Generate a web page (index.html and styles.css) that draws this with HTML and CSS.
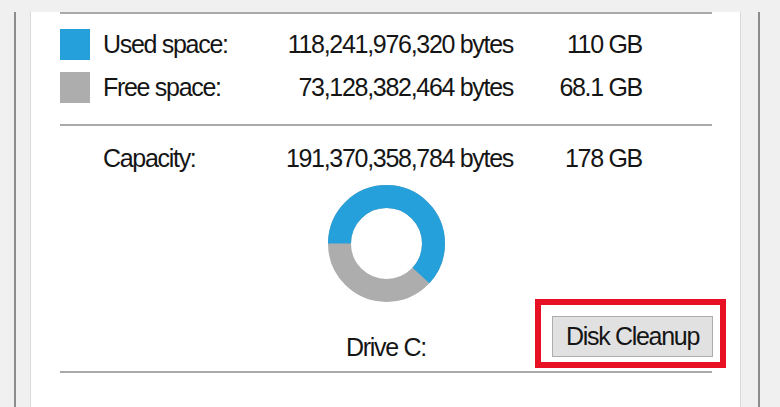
FILE: index.html
```html
<!DOCTYPE html>
<html lang="en">
<head>
    <meta charset="UTF-8">
    <title>Local Disk (C:) Properties</title>
    <link rel="stylesheet" href="styles.css">
</head>
<body>
    <div class="dialog">
        <div class="panel">
            <div class="rule"></div>
            <div class="usage">
                <div class="row">
                    <span class="swatch used"></span>
                    <span class="label">Used space:</span>
                    <span class="bytes">118,241,976,320 bytes</span>
                    <span class="size">110 GB</span>
                </div>
                <div class="row">
                    <span class="swatch free"></span>
                    <span class="label">Free space:</span>
                    <span class="bytes">73,128,382,464 bytes</span>
                    <span class="size">68.1 GB</span>
                </div>
            </div>
            <div class="rule"></div>
            <div class="row capacity">
                <span class="swatch"></span>
                <span class="label">Capacity:</span>
                <span class="bytes">191,370,358,784 bytes</span>
                <span class="size">178 GB</span>
            </div>
            <div class="chart">
                <svg width="117" height="117" viewBox="0 0 117 117">
                    <circle cx="58.5" cy="58.5" r="47" fill="none" stroke="#adadad" stroke-width="23"/>
                    <circle cx="58.5" cy="58.5" r="47" fill="none" stroke="#26a0da" stroke-width="23"
                        stroke-dasharray="182.5 300" transform="rotate(180 58.5 58.5)"/>
                </svg>
            </div>
            <div class="drive-row">
                <span></span>
                <span class="drive">Drive C:</span>
                <div class="highlight">
                    <button class="cleanup">Disk Cleanup</button>
                </div>
            </div>
            <div class="rule"></div>
        </div>
    </div>
</body>
</html>
```

FILE: styles.css
```css
* {
    margin: 0;
    padding: 0;
    box-sizing: border-box;
}
body {
    background: #f0f0f0;
    color: #151515;
    font-family: "Liberation Sans", Arial, sans-serif;
    font-size: 25px;
    letter-spacing: -1.3px;
    height: 407px;
    overflow: hidden;
}
.dialog {
    height: 407px;
    margin: 0 20px 0 14px;
    padding: 0 17px 0 14px;
    border-left: 2px solid #8c8c8c;
    border-right: 2px solid #8c8c8c;
}
.panel {
    height: 100%;
    background: #fff;
    border-left: 1px solid #dadada;
    border-right: 1px solid #dadada;
    padding: 0 28px 0 29px;
}
.rule {
    height: 2px;
    background: #a9a9a9;
}
.panel > .rule:first-child {
    margin-top: 12px;
}
.usage {
    margin: 15px 0 21px;
    display: flex;
    flex-direction: column;
    gap: 12px;
}
.row {
    display: flex;
    height: 31px;
    line-height: 31px;
    white-space: nowrap;
}
.swatch {
    width: 30px;
    height: 31px;
    margin-right: 13px;
}
.swatch.used {
    background: #26a0da;
}
.swatch.free {
    background: #adadad;
}
.label {
    width: 147px;
}
.bytes {
    width: 263px;
    text-align: right;
}
.size {
    width: 129px;
    text-align: right;
}
.capacity {
    margin-top: 17px;
}
.chart {
    display: flex;
    justify-content: center;
    margin-top: 11px;
}
.chart svg {
    display: block;
}
.drive-row {
    display: grid;
    grid-template-columns: 1fr auto 1fr;
    align-items: end;
    margin: -3px 0 3px;
}
.drive {
    line-height: 31px;
    margin-bottom: 5px;
}
.highlight {
    justify-self: end;
    margin-right: -14px;
    border: 6px solid #e81123;
    padding: 11px 7px 5px 11px;
}
.cleanup {
    display: block;
    width: 161px;
    height: 41px;
    background: #e1e1e1;
    border: 1px solid #adadad;
    color: #151515;
    font: inherit;
    letter-spacing: -1.3px;
    line-height: 39px;
}
```
